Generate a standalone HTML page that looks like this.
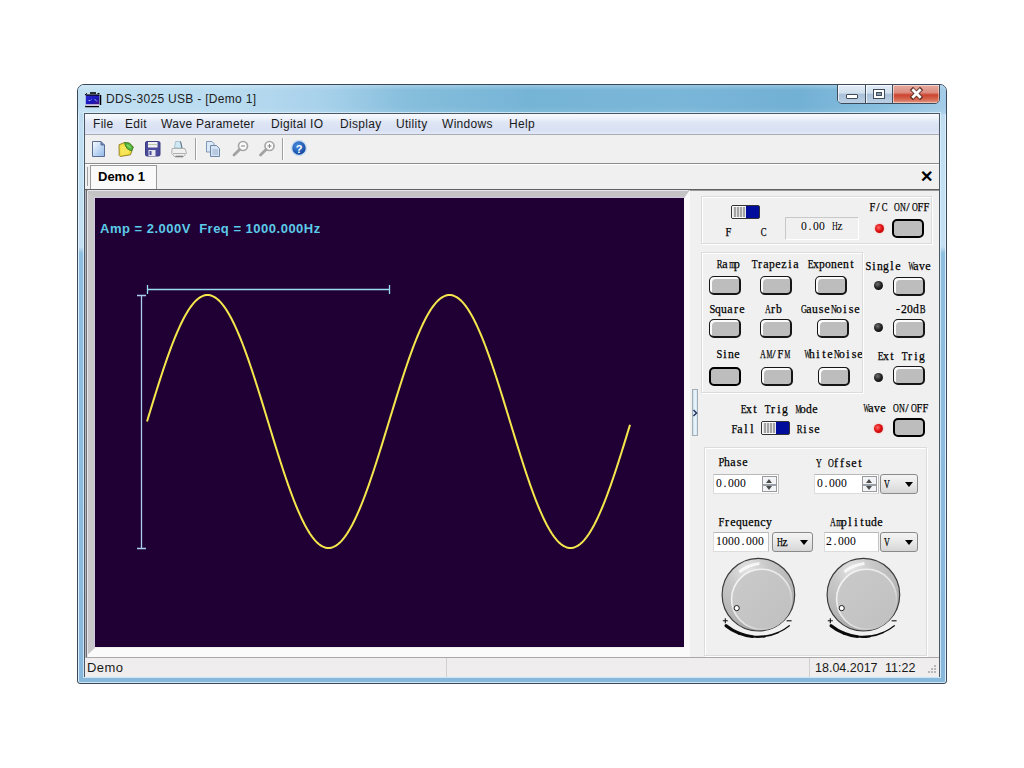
<!DOCTYPE html>
<html><head><meta charset="utf-8">
<style>
*{margin:0;padding:0;box-sizing:border-box}
html,body{width:1024px;height:768px;overflow:hidden;background:#fff;font-family:"Liberation Sans",sans-serif}
div,svg{position:absolute}
#win{left:77px;top:84px;width:870px;height:600px;border:1px solid #38485a;border-radius:7px 7px 3px 3px;
 background:linear-gradient(180deg,#b0d2ec 0px,#c2def2 40px,#c4e0f2 162px,#8fbfe0 168px,#88b8dc 100%);overflow:hidden;box-shadow:inset 1px 0 0 #dff0fc,inset -1px 0 0 #dff0fc,inset 0 -1px 0 #cfe6f6}
#titlebg{left:0;top:0;width:868px;height:29px;background:linear-gradient(180deg,rgba(255,255,255,.25) 0,rgba(255,255,255,0) 5px,rgba(255,255,255,0) 22px,rgba(255,255,255,.12) 29px),linear-gradient(90deg,#c2e0f2 0,#badcf0 150px,#a6d0ea 250px,#86bedc 330px,#76b4d6 450px,#7ab6d8 600px,#72b0d4 720px,#86bede 800px,#a4cce8 868px)}
#client{left:84px;top:113px;width:856px;height:564px;border:1px solid #4a5866;background:#f0f0f0;box-shadow:0 0 0 1px rgba(220,240,252,.8)}
.ttl{left:106px;top:92px;font-size:12px;color:#1e1e1e;white-space:nowrap;letter-spacing:0.3px}
.menu{left:85px;top:114px;width:854px;height:21px;background:linear-gradient(180deg,#f8fafd 0,#eef2fa 22%,#dfe6f5 40%,#d8e0f3 80%,#e2e8f6 100%);border-bottom:1px solid #a8aeb8}
.mi{top:117px;font-size:12px;color:#1a1a1a;white-space:nowrap;letter-spacing:0.3px}
.tb{left:85px;top:135px;width:854px;height:29px;background:#f0f0f0;border-bottom:1px solid #8c8c8c;box-shadow:0 1px 0 #fff}
.sep{top:138px;width:2px;height:22px;border-left:1px solid #a0a0a0;border-right:1px solid #fff}
.mono{font-family:"Liberation Serif",serif;font-size:12px;line-height:12px;color:#000;white-space:nowrap;display:flex;-webkit-text-stroke:0.25px #000}
.mono i{font-style:normal;width:6px;flex:none;text-align:center;display:block}

.gb{border:1px solid #dcdcdc;box-shadow:1px 1px 0 #fff inset, 1px 1px 0 #fff}
.btn{width:32px;height:19px;border-radius:5px;border:solid #161616;border-width:1px 2px 2px 1px;background:#bdbdbd;box-shadow:inset 2px 2px 0 #fbfbfb}
.btnp{width:32px;height:19px;border-radius:5px;border:2px solid #000;background:#bdbdbd}
.led{width:9px;height:9px;border-radius:50%}
.ledr{background:radial-gradient(circle at 40% 40%,#ff6a6a 0,#e01010 45%,#a00000 100%);box-shadow:0 0 2px #ff9090}
.ledk{background:radial-gradient(circle at 40% 35%,#707070 0,#202020 50%,#000 100%)}
.sw{width:29px;height:14px;border:1px solid #333;border-radius:2px;overflow:hidden;background:#000c9c}
.sw i{position:absolute;left:0;top:0;width:14px;height:12px;border:1px solid #f8f8f8;background:repeating-linear-gradient(90deg,#e4e4e4 0,#e4e4e4 1px,#a4a4a4 1px,#a4a4a4 3px);border-right:1px solid #e8e8f0}
.inp{background:#fff;border:1px solid #dcdcdc;border-top-color:#b8b8b8;border-right-color:#c4c4c4}
.spin{width:15px;height:16px;border:1px solid #9a9a9a;background:#f2f4f8}
.spin:before{content:"";position:absolute;left:3px;top:1.5px;border-left:3.5px solid transparent;border-right:3.5px solid transparent;border-bottom:4px solid #4a4a4a}
.spin:after{content:"";position:absolute;left:3px;top:9px;border-left:3.5px solid transparent;border-right:3.5px solid transparent;border-top:4px solid #4a4a4a}
.spl{width:13px;height:2px;background:#9aa0a8}
.cmb{width:38px;height:20px;border:1px solid #8a8a8a;border-radius:3px;background:linear-gradient(180deg,#f4f4f4 0,#e8e8e8 50%,#d6d6d6 100%)}
.arr{width:0;height:0;border-left:4px solid transparent;border-right:4px solid transparent;border-top:5px solid #000}
</style></head><body>
<div id="win">
  <div id="titlebg"></div>
</div>

<!-- caption buttons -->
<div style="left:837px;top:84px;width:103px;height:20px;border:1px solid #3c4b5c;border-radius:0 0 5px 5px;overflow:hidden">
  <div style="left:0;top:0;width:28px;height:18px;background:linear-gradient(180deg,#e4edf6 0,#cfdeec 45%,#a9c0d8 52%,#bcd0e4 100%);border-right:1px solid #40505e;box-shadow:inset 1px 1px 0 rgba(255,255,255,.7)"></div>
  <div style="left:28px;top:0;width:27px;height:18px;background:linear-gradient(180deg,#e4edf6 0,#cfdeec 45%,#a9c0d8 52%,#bcd0e4 100%);border-right:1px solid #40505e;box-shadow:inset 1px 1px 0 rgba(255,255,255,.7)"></div>
  <div style="left:55px;top:0;width:46px;height:18px;background:linear-gradient(180deg,#e6aaa0 0,#dc8c7e 42%,#cc4430 55%,#d4644c 78%,#e09888 100%);box-shadow:inset 1px 1px 0 rgba(255,240,240,.6),inset -1px -1px 0 rgba(255,230,220,.5)"></div>
</div>
<div style="left:846px;top:94px;width:12px;height:5px;background:#fff;border:1px solid #3e4c5c;border-radius:1px"></div>
<div style="left:873px;top:89px;width:12px;height:10px;border:1px solid #3e4c5c;background:#fff"></div>
<div style="left:876px;top:92px;width:6px;height:4px;border:1px solid #3e4c5c;background:#8a9aaa"></div>
<svg style="left:905px;top:84px" width="24" height="20"><path d="M8,6 L15,13 M15,6 L8,13" stroke="#5a2c24" stroke-width="4.5" stroke-linecap="square"/><path d="M8.3,6.3 L14.7,12.7 M14.7,6.3 L8.3,12.7" stroke="#fff" stroke-width="2.8" stroke-linecap="square"/></svg>
<!-- app icon -->
<svg style="left:82px;top:86px" width="24" height="24">
<defs><linearGradient id="gscr" x1="0" y1="0" x2="1" y2="1"><stop offset="0" stop-color="#2a2ad0"/><stop offset="0.6" stop-color="#1a16b8"/><stop offset="1" stop-color="#4a1080"/></linearGradient></defs>
<rect x="3.8" y="9" width="13.5" height="9.5" fill="url(#gscr)"/>
<path d="M3.5,9 V8 M4.2,7.5 H5" stroke="#000" stroke-width="1.1"/>
<path d="M8,7 H14" stroke="#000" stroke-width="1.6"/>
<path d="M15.5,7.5 H17.5" stroke="#000" stroke-width="1.1"/>
<path d="M3.8,9 H17.5" stroke="#000" stroke-width="1.2"/>
<path d="M18.5,9 V19" stroke="#000" stroke-width="1.5"/>
<path d="M3.2,20.5 H17" stroke="#000" stroke-width="1.5"/>
<rect x="4" y="18.5" width="13" height="1.2" fill="#e8d8e8"/>
<path d="M6.5,14.5 H8.5 M9.5,13.3 H10 M12.5,13 L15,15.5" stroke="#9ab0ff" stroke-width="1"/>
</svg>

<div class="ttl">DDS-3025 USB - [Demo 1]</div>
<div id="client"></div>
<div class="menu"></div>
<div class="mi" style="left:93px">File</div>
<div class="mi" style="left:125px">Edit</div>
<div class="mi" style="left:161px">Wave Parameter</div>
<div class="mi" style="left:271px">Digital IO</div>
<div class="mi" style="left:340px">Display</div>
<div class="mi" style="left:396px">Utility</div>
<div class="mi" style="left:442px">Windows</div>
<div class="mi" style="left:509px">Help</div>
<div class="tb"></div>
<div class="sep" style="left:195px"></div>
<div class="sep" style="left:282px"></div>


<svg style="left:0;top:0" width="1024" height="768">
<defs>
<linearGradient id="gdoc" x1="0" y1="0" x2="1" y2="1"><stop offset="0" stop-color="#f8fbff"/><stop offset="1" stop-color="#8fb8e8"/></linearGradient>
<linearGradient id="gfold" x1="0" y1="0" x2="0" y2="1"><stop offset="0" stop-color="#fff27a"/><stop offset="1" stop-color="#d8b800"/></linearGradient>
<radialGradient id="ghelp" cx="0.4" cy="0.35" r="0.7"><stop offset="0" stop-color="#4a8ee0"/><stop offset="1" stop-color="#0b3f98"/></radialGradient>
</defs>
<!-- new doc -->
<path d="M92.5,141.5 H101 L104.5,145 V156.5 H92.5 Z" fill="url(#gdoc)" stroke="#5a6c90" stroke-width="1"/>
<path d="M101,141.5 V145 H104.5" fill="#6b85b8" stroke="#5a6c90" stroke-width="1"/>
<!-- open folder -->
<path d="M119,144.8 L124.5,142.5 L129.5,143.2 L133.2,147 L130.5,154.8 L120.2,156.5 L119.2,155.5 Z" fill="#f2dc3c" stroke="#8a7a20" stroke-width="0.9"/>
<path d="M120.5,146 L126,145 L130,148 L128,153.5 L121,155 Z" fill="#f8e860" opacity="0.8"/>
<path d="M124.5,142.5 L129.5,143.2 L133.2,147 L131.5,151 L127.5,149 L125.5,146 Z" fill="#56b840" stroke="#2f7a22" stroke-width="0.8"/>
<path d="M127,145 L130.5,147.5" stroke="#a6e890" stroke-width="1"/>
<!-- save -->
<rect x="145.5" y="141.5" width="14.5" height="14.5" rx="1.5" fill="#4b4b9c" stroke="#3a3a80" stroke-width="1"/>
<rect x="148" y="142" width="9.5" height="5.5" fill="#f0f0f4"/>
<rect x="148" y="144" width="9.5" height="1" fill="#b8c8a8"/>
<rect x="148.5" y="150" width="7" height="6" fill="#e8e8f0"/>
<rect x="149.5" y="151" width="2" height="4" fill="#4b4b9c"/>
<!-- print -->
<path d="M174.5,148 L175.5,141.5 H180.5 L182,148 Z" fill="#cfe8f4" stroke="#98b8c8" stroke-width="0.8"/>
<path d="M180.5,141.5 L182,148" stroke="#5a7080" stroke-width="1"/>
<path d="M172,148.5 H185 L186.5,153 L183,157 H175 L171.8,153.5 Z" fill="#f0f0f0" stroke="#a8a8a8" stroke-width="0.9"/>
<path d="M173,153.5 H185.5" stroke="#b0b0b0" stroke-width="1"/>
<path d="M175.5,156.3 H183" stroke="#7a7a7a" stroke-width="1.2"/>
<!-- copy -->
<path d="M206.5,141.5 H212 L214,143.5 V152 H206.5 Z" fill="#dbe8f8" stroke="#7f98b8" stroke-width="1"/>
<path d="M210.5,145.5 H216.5 L219.5,148.5 V156.5 H210.5 Z" fill="#d4e4f6" stroke="#6f88a8" stroke-width="1"/>
<path d="M212.5,150 H218 M212.5,152 H218 M212.5,154 H218" stroke="#8aa0c0" stroke-width="0.8"/>
<!-- zoom - -->
<circle cx="243" cy="146" r="4.5" fill="#fbfbfb" stroke="#a6a6a6" stroke-width="1.7"/>
<path d="M239.6,149.4 L234,155" stroke="#a2a2a2" stroke-width="2.8" stroke-linecap="round"/>
<path d="M241,146 H245" stroke="#8a8a8a" stroke-width="1.1"/>
<!-- zoom + -->
<circle cx="269.5" cy="146" r="4.5" fill="#fbfbfb" stroke="#a6a6a6" stroke-width="1.7"/>
<path d="M266.1,149.4 L260.5,155" stroke="#a2a2a2" stroke-width="2.8" stroke-linecap="round"/>
<path d="M267.5,146 H271.5 M269.5,144 V148" stroke="#8a8a8a" stroke-width="1.1"/>
<!-- help -->
<circle cx="299" cy="148" r="7.4" fill="url(#ghelp)" stroke="#c8dcf0" stroke-width="1.4"/>
<text x="299" y="152.5" font-family="Liberation Sans" font-weight="bold" font-size="11" fill="#fff" text-anchor="middle">?</text>
</svg>

<!-- tab strip -->
<div style="left:85px;top:165px;width:854px;height:24px;background:#f0f0f0"></div>
<div style="left:87px;top:167px;width:1px;height:19px;background:#a0a0a0"></div>
<div style="left:90px;top:165px;width:67px;height:25px;background:#fafafa;border:1px solid #9a9a9a;border-bottom:none"></div>
<div style="left:98px;top:169px;font-size:13px;font-weight:bold;color:#000;white-space:nowrap">Demo 1</div>
<div style="left:920px;top:167px;font-size:16px;font-weight:bold;color:#000">✕</div>
<div style="left:85px;top:189px;width:854px;height:1px;background:#606060"></div><div style="left:85px;top:190px;width:854px;height:1px;background:#9a9a9a"></div>

<!-- MDI area bg -->
<div style="left:85px;top:191px;width:854px;height:466px;background:#f0f0f0"></div>
<!-- scope sunken frame -->
<div style="left:85px;top:190px;width:605px;height:467px;border-style:solid;border-width:8px 6px 9px 10px;border-color:#c4c4c6 #fafafa #fafafa #c8c8ca"></div>
<div style="left:94px;top:197px;width:591px;height:1px;background:#d0c8dc"></div>
<div style="left:94px;top:197px;width:1px;height:451px;background:#d0c8dc"></div>
<div style="left:85px;top:190px;width:1px;height:467px;background:#b4b8bc"></div>
<div style="left:86px;top:190px;width:1px;height:467px;background:#6c6c72"></div>
<div style="left:87px;top:191px;width:1px;height:466px;background:#e6e6ea"></div>
<div style="left:88px;top:190px;width:600px;height:1px;background:#e6e6ea"></div>
<div style="left:95px;top:198px;width:589px;height:449px;background:#200034"></div>
<svg style="left:0;top:0" width="1024" height="768">
<path d="M147.0,421.5 L148.0,418.2 L149.0,414.9 L150.0,411.7 L151.0,408.4 L152.0,405.1 L153.0,401.9 L154.0,398.6 L155.0,395.4 L156.0,392.2 L157.0,389.0 L158.0,385.9 L159.0,382.7 L160.0,379.6 L161.0,376.5 L162.0,373.5 L163.0,370.4 L164.0,367.5 L165.0,364.5 L166.0,361.6 L167.0,358.7 L168.0,355.9 L169.0,353.1 L170.0,350.4 L171.0,347.7 L172.0,345.0 L173.0,342.4 L174.0,339.9 L175.0,337.4 L176.0,335.0 L177.0,332.6 L178.0,330.3 L179.0,328.1 L180.0,325.9 L181.0,323.8 L182.0,321.7 L183.0,319.7 L184.0,317.8 L185.0,316.0 L186.0,314.2 L187.0,312.5 L188.0,310.9 L189.0,309.3 L190.0,307.8 L191.0,306.4 L192.0,305.1 L193.0,303.9 L194.0,302.7 L195.0,301.6 L196.0,300.6 L197.0,299.7 L198.0,298.8 L199.0,298.1 L200.0,297.4 L201.0,296.8 L202.0,296.3 L203.0,295.9 L204.0,295.5 L205.0,295.3 L206.0,295.1 L207.0,295.0 L208.0,295.0 L209.0,295.1 L210.0,295.3 L211.0,295.5 L212.0,295.9 L213.0,296.3 L214.0,296.8 L215.0,297.4 L216.0,298.1 L217.0,298.8 L218.0,299.7 L219.0,300.6 L220.0,301.6 L221.0,302.7 L222.0,303.9 L223.0,305.1 L224.0,306.4 L225.0,307.8 L226.0,309.3 L227.0,310.9 L228.0,312.5 L229.0,314.2 L230.0,316.0 L231.0,317.8 L232.0,319.7 L233.0,321.7 L234.0,323.8 L235.0,325.9 L236.0,328.1 L237.0,330.3 L238.0,332.6 L239.0,335.0 L240.0,337.4 L241.0,339.9 L242.0,342.4 L243.0,345.0 L244.0,347.7 L245.0,350.4 L246.0,353.1 L247.0,355.9 L248.0,358.7 L249.0,361.6 L250.0,364.5 L251.0,367.5 L252.0,370.4 L253.0,373.5 L254.0,376.5 L255.0,379.6 L256.0,382.7 L257.0,385.9 L258.0,389.0 L259.0,392.2 L260.0,395.4 L261.0,398.6 L262.0,401.9 L263.0,405.1 L264.0,408.4 L265.0,411.7 L266.0,414.9 L267.0,418.2 L268.0,421.5 L269.0,424.8 L270.0,428.1 L271.0,431.3 L272.0,434.6 L273.0,437.9 L274.0,441.1 L275.0,444.4 L276.0,447.6 L277.0,450.8 L278.0,454.0 L279.0,457.1 L280.0,460.3 L281.0,463.4 L282.0,466.5 L283.0,469.5 L284.0,472.6 L285.0,475.5 L286.0,478.5 L287.0,481.4 L288.0,484.3 L289.0,487.1 L290.0,489.9 L291.0,492.6 L292.0,495.3 L293.0,498.0 L294.0,500.6 L295.0,503.1 L296.0,505.6 L297.0,508.0 L298.0,510.4 L299.0,512.7 L300.0,514.9 L301.0,517.1 L302.0,519.2 L303.0,521.3 L304.0,523.3 L305.0,525.2 L306.0,527.0 L307.0,528.8 L308.0,530.5 L309.0,532.1 L310.0,533.7 L311.0,535.2 L312.0,536.6 L313.0,537.9 L314.0,539.1 L315.0,540.3 L316.0,541.4 L317.0,542.4 L318.0,543.3 L319.0,544.2 L320.0,544.9 L321.0,545.6 L322.0,546.2 L323.0,546.7 L324.0,547.1 L325.0,547.5 L326.0,547.7 L327.0,547.9 L328.0,548.0 L329.0,548.0 L330.0,547.9 L331.0,547.7 L332.0,547.5 L333.0,547.1 L334.0,546.7 L335.0,546.2 L336.0,545.6 L337.0,544.9 L338.0,544.2 L339.0,543.3 L340.0,542.4 L341.0,541.4 L342.0,540.3 L343.0,539.1 L344.0,537.9 L345.0,536.6 L346.0,535.2 L347.0,533.7 L348.0,532.1 L349.0,530.5 L350.0,528.8 L351.0,527.0 L352.0,525.2 L353.0,523.3 L354.0,521.3 L355.0,519.2 L356.0,517.1 L357.0,514.9 L358.0,512.7 L359.0,510.4 L360.0,508.0 L361.0,505.6 L362.0,503.1 L363.0,500.6 L364.0,498.0 L365.0,495.3 L366.0,492.6 L367.0,489.9 L368.0,487.1 L369.0,484.3 L370.0,481.4 L371.0,478.5 L372.0,475.5 L373.0,472.6 L374.0,469.5 L375.0,466.5 L376.0,463.4 L377.0,460.3 L378.0,457.1 L379.0,454.0 L380.0,450.8 L381.0,447.6 L382.0,444.4 L383.0,441.1 L384.0,437.9 L385.0,434.6 L386.0,431.3 L387.0,428.1 L388.0,424.8 L389.0,421.5 L390.0,418.2 L391.0,414.9 L392.0,411.7 L393.0,408.4 L394.0,405.1 L395.0,401.9 L396.0,398.6 L397.0,395.4 L398.0,392.2 L399.0,389.0 L400.0,385.9 L401.0,382.7 L402.0,379.6 L403.0,376.5 L404.0,373.5 L405.0,370.4 L406.0,367.5 L407.0,364.5 L408.0,361.6 L409.0,358.7 L410.0,355.9 L411.0,353.1 L412.0,350.4 L413.0,347.7 L414.0,345.0 L415.0,342.4 L416.0,339.9 L417.0,337.4 L418.0,335.0 L419.0,332.6 L420.0,330.3 L421.0,328.1 L422.0,325.9 L423.0,323.8 L424.0,321.7 L425.0,319.7 L426.0,317.8 L427.0,316.0 L428.0,314.2 L429.0,312.5 L430.0,310.9 L431.0,309.3 L432.0,307.8 L433.0,306.4 L434.0,305.1 L435.0,303.9 L436.0,302.7 L437.0,301.6 L438.0,300.6 L439.0,299.7 L440.0,298.8 L441.0,298.1 L442.0,297.4 L443.0,296.8 L444.0,296.3 L445.0,295.9 L446.0,295.5 L447.0,295.3 L448.0,295.1 L449.0,295.0 L450.0,295.0 L451.0,295.1 L452.0,295.3 L453.0,295.5 L454.0,295.9 L455.0,296.3 L456.0,296.8 L457.0,297.4 L458.0,298.1 L459.0,298.8 L460.0,299.7 L461.0,300.6 L462.0,301.6 L463.0,302.7 L464.0,303.9 L465.0,305.1 L466.0,306.4 L467.0,307.8 L468.0,309.3 L469.0,310.9 L470.0,312.5 L471.0,314.2 L472.0,316.0 L473.0,317.8 L474.0,319.7 L475.0,321.7 L476.0,323.8 L477.0,325.9 L478.0,328.1 L479.0,330.3 L480.0,332.6 L481.0,335.0 L482.0,337.4 L483.0,339.9 L484.0,342.4 L485.0,345.0 L486.0,347.7 L487.0,350.4 L488.0,353.1 L489.0,355.9 L490.0,358.7 L491.0,361.6 L492.0,364.5 L493.0,367.5 L494.0,370.4 L495.0,373.5 L496.0,376.5 L497.0,379.6 L498.0,382.7 L499.0,385.9 L500.0,389.0 L501.0,392.2 L502.0,395.4 L503.0,398.6 L504.0,401.9 L505.0,405.1 L506.0,408.4 L507.0,411.7 L508.0,414.9 L509.0,418.2 L510.0,421.5 L511.0,424.8 L512.0,428.1 L513.0,431.3 L514.0,434.6 L515.0,437.9 L516.0,441.1 L517.0,444.4 L518.0,447.6 L519.0,450.8 L520.0,454.0 L521.0,457.1 L522.0,460.3 L523.0,463.4 L524.0,466.5 L525.0,469.5 L526.0,472.6 L527.0,475.5 L528.0,478.5 L529.0,481.4 L530.0,484.3 L531.0,487.1 L532.0,489.9 L533.0,492.6 L534.0,495.3 L535.0,498.0 L536.0,500.6 L537.0,503.1 L538.0,505.6 L539.0,508.0 L540.0,510.4 L541.0,512.7 L542.0,514.9 L543.0,517.1 L544.0,519.2 L545.0,521.3 L546.0,523.3 L547.0,525.2 L548.0,527.0 L549.0,528.8 L550.0,530.5 L551.0,532.1 L552.0,533.7 L553.0,535.2 L554.0,536.6 L555.0,537.9 L556.0,539.1 L557.0,540.3 L558.0,541.4 L559.0,542.4 L560.0,543.3 L561.0,544.2 L562.0,544.9 L563.0,545.6 L564.0,546.2 L565.0,546.7 L566.0,547.1 L567.0,547.5 L568.0,547.7 L569.0,547.9 L570.0,548.0 L571.0,548.0 L572.0,547.9 L573.0,547.7 L574.0,547.5 L575.0,547.1 L576.0,546.7 L577.0,546.2 L578.0,545.6 L579.0,544.9 L580.0,544.2 L581.0,543.3 L582.0,542.4 L583.0,541.4 L584.0,540.3 L585.0,539.1 L586.0,537.9 L587.0,536.6 L588.0,535.2 L589.0,533.7 L590.0,532.1 L591.0,530.5 L592.0,528.8 L593.0,527.0 L594.0,525.2 L595.0,523.3 L596.0,521.3 L597.0,519.2 L598.0,517.1 L599.0,514.9 L600.0,512.7 L601.0,510.4 L602.0,508.0 L603.0,505.6 L604.0,503.1 L605.0,500.6 L606.0,498.0 L607.0,495.3 L608.0,492.6 L609.0,489.9 L610.0,487.1 L611.0,484.3 L612.0,481.4 L613.0,478.5 L614.0,475.5 L615.0,472.6 L616.0,469.5 L617.0,466.5 L618.0,463.4 L619.0,460.3 L620.0,457.1 L621.0,454.0 L622.0,450.8 L623.0,447.6 L624.0,444.4 L625.0,441.1 L626.0,437.9 L627.0,434.6 L628.0,431.3 L629.0,428.1 L630.0,424.8" fill="none" stroke="#f4e64c" stroke-width="2"/>
<path d="M147.5,289.5 H389.5 M147.5,285 V294 M389.5,285 V294" stroke="#9adcf0" stroke-width="1.3" fill="none"/>
<path d="M141.5,295.5 V548.5 M137,295.5 H146 M137,548.5 H146" stroke="#a8cdf0" stroke-width="1.3" fill="none"/>
</svg>
<div style="left:100px;top:221px;font-size:13px;font-weight:bold;color:#5ccbe8;white-space:nowrap;letter-spacing:0.5px;line-height:15px">Amp = 2.000V&nbsp; Freq = 1000.000Hz</div>


<!-- right panel -->
<div class="gb" style="left:701px;top:196px;width:231px;height:48px"></div>
<div class="sw" style="left:731px;top:205px"><i></i></div>
<div class="mono" style="left:725px;top:226px"><i style="transform:scaleX(0.87)">F</i></div>
<div class="mono" style="left:760px;top:226px"><i style="transform:scaleX(0.72)">C</i></div>
<div style="left:785px;top:217px;width:74px;height:23px;border:1px solid;border-color:#c8c8c8 #fff #fff #c8c8c8;background:#f0f0f0"></div>
<div class="mono" style="left:801px;top:220px;-webkit-text-stroke:0"><i style="transform:scaleX(0.97)">0</i><i>.</i><i style="transform:scaleX(0.97)">0</i><i style="transform:scaleX(0.97)">0</i><i>&nbsp;</i><i style="transform:scaleX(0.67)">H</i><i>z</i></div>
<div class="mono" style="left:869px;top:201px"><i style="transform:scaleX(0.87)">F</i><i>/</i><i style="transform:scaleX(0.72)">C</i><i>&nbsp;</i><i style="transform:scaleX(0.67)">O</i><i style="transform:scaleX(0.67)">N</i><i>/</i><i style="transform:scaleX(0.67)">O</i><i style="transform:scaleX(0.87)">F</i><i style="transform:scaleX(0.87)">F</i></div>
<div class="led ledr" style="left:875px;top:224px"></div>
<div class="btnp" style="left:892px;top:219px"></div>

<div class="gb" style="left:701px;top:252px;width:162px;height:141px"></div>
<div class="mono" style="left:716px;top:258px"><i style="transform:scaleX(0.72)">R</i><i>a</i><i style="transform:scaleX(0.62)">m</i><i style="transform:scaleX(0.97)">p</i></div>
<div class="mono" style="left:751px;top:258px"><i style="transform:scaleX(0.79)">T</i><i>r</i><i>a</i><i style="transform:scaleX(0.97)">p</i><i>e</i><i>z</i><i>i</i><i>a</i></div>
<div class="mono" style="left:807px;top:258px"><i style="transform:scaleX(0.79)">E</i><i style="transform:scaleX(0.97)">x</i><i style="transform:scaleX(0.97)">p</i><i style="transform:scaleX(0.97)">o</i><i style="transform:scaleX(0.97)">n</i><i>e</i><i style="transform:scaleX(0.97)">n</i><i>t</i></div>
<div class="btn" style="left:709px;top:276px"></div>
<div class="btn" style="left:760px;top:276px"></div>
<div class="btn" style="left:815px;top:276px"></div>
<div class="mono" style="left:709px;top:303px"><i style="transform:scaleX(0.87)">S</i><i style="transform:scaleX(0.97)">q</i><i style="transform:scaleX(0.97)">u</i><i>a</i><i>r</i><i>e</i></div>
<div class="mono" style="left:764px;top:303px"><i style="transform:scaleX(0.67)">A</i><i>r</i><i style="transform:scaleX(0.97)">b</i></div>
<div class="mono" style="left:800px;top:303px"><i style="transform:scaleX(0.67)">G</i><i>a</i><i style="transform:scaleX(0.97)">u</i><i>s</i><i>e</i><i style="transform:scaleX(0.67)">N</i><i style="transform:scaleX(0.97)">o</i><i>i</i><i>s</i><i>e</i></div>
<div class="btn" style="left:709px;top:319px"></div>
<div class="btn" style="left:760px;top:319px"></div>
<div class="btn" style="left:817px;top:319px"></div>
<div class="mono" style="left:716px;top:348px"><i style="transform:scaleX(0.87)">S</i><i>i</i><i style="transform:scaleX(0.97)">n</i><i>e</i></div>
<div class="mono" style="left:759px;top:348px"><i style="transform:scaleX(0.67)">A</i><i style="transform:scaleX(0.54)">M</i><i>/</i><i style="transform:scaleX(0.87)">F</i><i style="transform:scaleX(0.54)">M</i></div>
<div class="mono" style="left:803px;top:348px;width:59px;overflow:hidden"><i style="transform:scaleX(0.51)">W</i><i style="transform:scaleX(0.97)">h</i><i>i</i><i>t</i><i>e</i><i style="transform:scaleX(0.67)">N</i><i style="transform:scaleX(0.97)">o</i><i>i</i><i>s</i><i>e</i></div>
<div class="btnp" style="left:709px;top:367px"></div>
<div class="btn" style="left:761px;top:367px"></div>
<div class="btn" style="left:818px;top:367px"></div>

<div class="mono" style="left:865px;top:260px"><i style="transform:scaleX(0.87)">S</i><i>i</i><i style="transform:scaleX(0.97)">n</i><i style="transform:scaleX(0.97)">g</i><i>l</i><i>e</i><i>&nbsp;</i><i style="transform:scaleX(0.51)">W</i><i>a</i><i style="transform:scaleX(0.97)">v</i><i>e</i></div>
<div class="led ledk" style="left:874px;top:281px"></div>
<div class="btn" style="left:893px;top:277px"></div>
<div class="mono" style="left:895px;top:303px"><i>-</i><i style="transform:scaleX(0.97)">2</i><i style="transform:scaleX(0.97)">0</i><i style="transform:scaleX(0.97)">d</i><i style="transform:scaleX(0.72)">B</i></div>
<div class="led ledk" style="left:874px;top:323px"></div>
<div class="btn" style="left:893px;top:319px"></div>
<div class="mono" style="left:877px;top:350px"><i style="transform:scaleX(0.79)">E</i><i style="transform:scaleX(0.97)">x</i><i>t</i><i>&nbsp;</i><i style="transform:scaleX(0.79)">T</i><i>r</i><i>i</i><i style="transform:scaleX(0.97)">g</i></div>
<div class="led ledk" style="left:874px;top:373px"></div>
<div class="btn" style="left:893px;top:366px"></div>

<div style="left:692px;top:389px;width:6px;height:47px;border:1px solid #a4acb4;background:linear-gradient(90deg,#c8dcea,#eef8fe 50%,#d4e4f0)"></div>
<svg style="left:692px;top:408px" width="6" height="10"><path d="M1.5,2 L4.5,5 L1.5,8" stroke="#1a2a5a" stroke-width="1.4" fill="none"/></svg>

<div class="mono" style="left:740px;top:403px"><i style="transform:scaleX(0.79)">E</i><i style="transform:scaleX(0.97)">x</i><i>t</i><i>&nbsp;</i><i style="transform:scaleX(0.79)">T</i><i>r</i><i>i</i><i style="transform:scaleX(0.97)">g</i><i>&nbsp;</i><i style="transform:scaleX(0.54)">M</i><i style="transform:scaleX(0.97)">o</i><i style="transform:scaleX(0.97)">d</i><i>e</i></div>
<div class="mono" style="left:731px;top:423px"><i style="transform:scaleX(0.87)">F</i><i>a</i><i>l</i><i>l</i></div>
<div class="sw" style="left:761px;top:421px"><i></i></div>
<div class="mono" style="left:796px;top:423px"><i style="transform:scaleX(0.72)">R</i><i>i</i><i>s</i><i>e</i></div>
<div class="mono" style="left:862px;top:402px"><i style="transform:scaleX(0.51)">W</i><i>a</i><i style="transform:scaleX(0.97)">v</i><i>e</i><i>&nbsp;</i><i style="transform:scaleX(0.67)">O</i><i style="transform:scaleX(0.67)">N</i><i>/</i><i style="transform:scaleX(0.67)">O</i><i style="transform:scaleX(0.87)">F</i><i style="transform:scaleX(0.87)">F</i></div>
<div class="led ledr" style="left:874px;top:424px"></div>
<div class="btnp" style="left:893px;top:418px"></div>

<div class="gb" style="left:704px;top:447px;width:223px;height:209px"></div>
<div class="mono" style="left:718px;top:456px"><i style="transform:scaleX(0.87)">P</i><i style="transform:scaleX(0.97)">h</i><i>a</i><i>s</i><i>e</i></div>
<div class="inp" style="left:713px;top:474px;width:66px;height:20px"></div>
<div class="spin" style="left:762px;top:476px"><div class="spl" style="left:0;top:6.5px"></div></div>
<div class="mono" style="left:716px;top:477px;-webkit-text-stroke:0"><i style="transform:scaleX(0.97)">0</i><i>.</i><i style="transform:scaleX(0.97)">0</i><i style="transform:scaleX(0.97)">0</i><i style="transform:scaleX(0.97)">0</i></div>
<div class="mono" style="left:815px;top:457px"><i style="transform:scaleX(0.67)">Y</i><i>&nbsp;</i><i style="transform:scaleX(0.67)">O</i><i>f</i><i>f</i><i>s</i><i>e</i><i>t</i></div>
<div class="inp" style="left:814px;top:474px;width:65px;height:20px"></div>
<div class="spin" style="left:862px;top:476px"><div class="spl" style="left:0;top:6.5px"></div></div>
<div class="mono" style="left:817px;top:477px;-webkit-text-stroke:0"><i style="transform:scaleX(0.97)">0</i><i>.</i><i style="transform:scaleX(0.97)">0</i><i style="transform:scaleX(0.97)">0</i><i style="transform:scaleX(0.97)">0</i></div>
<div class="cmb" style="left:880px;top:474px"></div>
<div class="mono" style="left:883px;top:478px"><i style="transform:scaleX(0.67)">V</i></div>
<div class="arr" style="left:905px;top:482px"></div>

<div class="mono" style="left:718px;top:516px"><i style="transform:scaleX(0.87)">F</i><i>r</i><i>e</i><i style="transform:scaleX(0.97)">q</i><i style="transform:scaleX(0.97)">u</i><i>e</i><i style="transform:scaleX(0.97)">n</i><i>c</i><i style="transform:scaleX(0.97)">y</i></div>
<div class="inp" style="left:713px;top:532px;width:56px;height:20px"></div>
<div class="mono" style="left:716px;top:535px;-webkit-text-stroke:0"><i style="transform:scaleX(0.97)">1</i><i style="transform:scaleX(0.97)">0</i><i style="transform:scaleX(0.97)">0</i><i style="transform:scaleX(0.97)">0</i><i>.</i><i style="transform:scaleX(0.97)">0</i><i style="transform:scaleX(0.97)">0</i><i style="transform:scaleX(0.97)">0</i></div>
<div class="cmb" style="left:772px;top:532px;width:41px"></div>
<div class="mono" style="left:776px;top:536px"><i style="transform:scaleX(0.67)">H</i><i>z</i></div>
<div class="arr" style="left:800px;top:540px"></div>
<div class="mono" style="left:829px;top:516px"><i style="transform:scaleX(0.67)">A</i><i style="transform:scaleX(0.62)">m</i><i style="transform:scaleX(0.97)">p</i><i>l</i><i>i</i><i>t</i><i style="transform:scaleX(0.97)">u</i><i style="transform:scaleX(0.97)">d</i><i>e</i></div>
<div class="inp" style="left:824px;top:532px;width:55px;height:20px"></div>
<div class="mono" style="left:826px;top:535px;-webkit-text-stroke:0"><i style="transform:scaleX(0.97)">2</i><i>.</i><i style="transform:scaleX(0.97)">0</i><i style="transform:scaleX(0.97)">0</i><i style="transform:scaleX(0.97)">0</i></div>
<div class="cmb" style="left:880px;top:532px"></div>
<div class="mono" style="left:883px;top:536px"><i style="transform:scaleX(0.67)">V</i></div>
<div class="arr" style="left:905px;top:540px"></div>


<svg style="left:0;top:0" width="1024" height="768">
<defs>
<radialGradient id="kout" cx="0.35" cy="0.15" r="0.95"><stop offset="0" stop-color="#e4e4e4"/><stop offset="0.3" stop-color="#c8c8c8"/><stop offset="0.7" stop-color="#b6b6b6"/><stop offset="1" stop-color="#9c9c9c"/></radialGradient>
<linearGradient id="kin" x1="0" y1="0" x2="1" y2="1"><stop offset="0" stop-color="#cacaca"/><stop offset="1" stop-color="#c0c0c0"/></linearGradient>
<linearGradient id="krim" x1="0" y1="0" x2="1" y2="1"><stop offset="0" stop-color="#f8f8f8"/><stop offset="0.6" stop-color="#e4e4e4"/><stop offset="1" stop-color="#a8a8a8"/></linearGradient>
</defs>
<circle cx="758.4" cy="594.7" r="36.3" fill="url(#kout)" stroke="#3c3c3c" stroke-width="1.2"/>
<path d="M739.4,572 Q747.4,565 759.4,563.5" stroke="#fbfbfb" stroke-width="3" fill="none" opacity="0.85"/>
<circle cx="761.6" cy="599.3" r="30" fill="url(#kin)" stroke="url(#krim)" stroke-width="1.6"/>
<circle cx="736.7" cy="608.1" r="2.6" fill="#fff" stroke="#1a1a1a" stroke-width="1"/>
<path d="M722.8,620.8 H727.8 M725.3,618.3 V623.3" stroke="#111" stroke-width="1.1"/>
<path d="M786.6,620.8 H791.6" stroke="#111" stroke-width="1.1"/>
<path d="M726.06,625.66 A50.5,50.5 0 0,0 738.78,633.12" stroke="#0a0a0a" stroke-width="3.2" fill="none" stroke-linecap="round"/>
<path d="M738.78,633.12 A50.5,50.5 0 0,0 752.42,636.52" stroke="#0a0a0a" stroke-width="2.8" fill="none" stroke-linecap="round"/>
<path d="M752.42,636.52 A50.5,50.5 0 0,0 764.73,636.31" stroke="#0a0a0a" stroke-width="2.2" fill="none" stroke-linecap="round"/>
<path d="M764.73,636.31 A50.5,50.5 0 0,0 778.24,632.43" stroke="#0a0a0a" stroke-width="1.6" fill="none" stroke-linecap="round"/>
<path d="M778.24,632.43 A50.5,50.5 0 0,0 789.34,625.66" stroke="#0a0a0a" stroke-width="1.2" fill="none" stroke-linecap="round"/>
<circle cx="863.4" cy="594.7" r="36.3" fill="url(#kout)" stroke="#3c3c3c" stroke-width="1.2"/>
<path d="M844.4,572 Q852.4,565 864.4,563.5" stroke="#fbfbfb" stroke-width="3" fill="none" opacity="0.85"/>
<circle cx="866.6" cy="599.3" r="30" fill="url(#kin)" stroke="url(#krim)" stroke-width="1.6"/>
<circle cx="841.7" cy="608.1" r="2.6" fill="#fff" stroke="#1a1a1a" stroke-width="1"/>
<path d="M827.8,620.8 H832.8 M830.3,618.3 V623.3" stroke="#111" stroke-width="1.1"/>
<path d="M891.6,620.8 H896.6" stroke="#111" stroke-width="1.1"/>
<path d="M831.06,625.66 A50.5,50.5 0 0,0 843.78,633.12" stroke="#0a0a0a" stroke-width="3.2" fill="none" stroke-linecap="round"/>
<path d="M843.78,633.12 A50.5,50.5 0 0,0 857.42,636.52" stroke="#0a0a0a" stroke-width="2.8" fill="none" stroke-linecap="round"/>
<path d="M857.42,636.52 A50.5,50.5 0 0,0 869.73,636.31" stroke="#0a0a0a" stroke-width="2.2" fill="none" stroke-linecap="round"/>
<path d="M869.73,636.31 A50.5,50.5 0 0,0 883.24,632.43" stroke="#0a0a0a" stroke-width="1.6" fill="none" stroke-linecap="round"/>
<path d="M883.24,632.43 A50.5,50.5 0 0,0 894.34,625.66" stroke="#0a0a0a" stroke-width="1.2" fill="none" stroke-linecap="round"/>
</svg>

<!-- status bar -->
<div style="left:85px;top:657px;width:854px;height:20px;background:#efeded;border-top:1px solid #a8a8a8"></div>
<div style="left:446px;top:658px;width:1px;height:19px;background:#d0d0d0"></div>
<div style="left:809px;top:658px;width:1px;height:19px;background:#d0d0d0"></div>
<div style="left:87px;top:660px;font-size:13px;letter-spacing:0.4px;line-height:15px;color:#1a1a1a">Demo</div>
<div style="left:815px;top:661px;font-size:12.5px;line-height:15px;color:#1a1a1a;white-space:nowrap">18.04.2017</div>
<div style="left:885px;top:661px;font-size:12.5px;line-height:15px;color:#1a1a1a;white-space:nowrap">11:22</div>
<svg style="left:926px;top:664px" width="12" height="12"><g fill="#b8b8b8"><rect x="8" y="1" width="2" height="2"/><rect x="5" y="4" width="2" height="2"/><rect x="8" y="4" width="2" height="2"/><rect x="2" y="7" width="2" height="2"/><rect x="5" y="7" width="2" height="2"/><rect x="8" y="7" width="2" height="2"/></g></svg>
</body></html>
